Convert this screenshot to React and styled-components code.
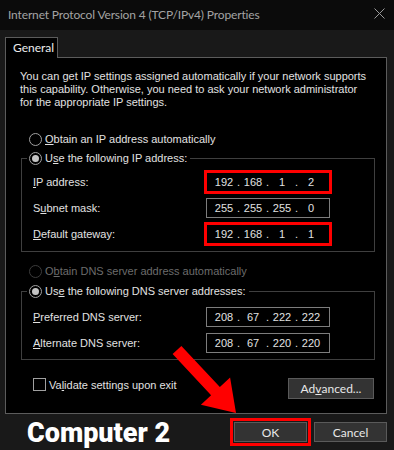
import React from "react";
import styled, { createGlobalStyle, css } from "styled-components";

const Global = createGlobalStyle`
  html, body { margin: 0; padding: 0; background: #191919; }
  * { box-sizing: border-box; }
`;

const dialogFont = `"Liberation Sans", Arial, sans-serif`;
const uiFont = `Lato, "Liberation Sans", sans-serif`;

const Window = styled.div`
  position: relative;
  width: 394px;
  height: 450px;
  background: #191919;
  overflow: hidden;
  font-family: ${dialogFont};
  font-size: 11px;
  color: #e2e2e2;
`;

const TitleBar = styled.div`
  height: 30px;
  background: #0b0b0b;
  display: flex;
  align-items: center;
  justify-content: space-between;
  padding: 0 8px 1px 8px;
`;

const Title = styled.div`
  font-family: ${uiFont};
  font-size: 12px;
  letter-spacing: -0.15px;
  color: #a3a3a3;
`;

const CloseIcon = styled.svg`
  width: 11px;
  height: 11px;
  margin-right: 1px;
  margin-top: -2px;
`;

const Body = styled.div`
  padding: 7px 7px 0 5px;
`;

const TabStrip = styled.div`
  display: flex;
  height: 20px;
`;

const Tab = styled.div`
  position: relative;
  z-index: 1;
  width: 53px;
  height: 21px;
  background: #000;
  border: 1px solid #5c5c5c;
  border-bottom: none;
  font-family: ${uiFont};
  font-size: 12px;
  color: #ececec;
  padding: 2px 0 0 7px;
`;

const Panel = styled.div`
  height: 357px;
  border: 1px solid #5c5c5c;
  background: #000;
  padding: 12px 0 0 14px;
  display: flex;
  flex-direction: column;
`;

const Intro = styled.p`
  margin: 0;
  line-height: 13px;
  width: 350px;
`;

const OptionRow = styled.div`
  display: flex;
  align-items: center;
  height: 14px;
  padding-left: ${(p) => p.$indent || 0}px;
  margin-top: ${(p) => p.$top || 0}px;
  color: ${(p) => (p.$disabled ? "#6c6c6c" : "#e2e2e2")};
  white-space: nowrap;
`;

const RadioCircle = styled.span`
  position: relative;
  width: 13px;
  height: 13px;
  border-radius: 50%;
  border: 1px solid ${(p) => (p.$disabled ? "#3c3c3c" : "#a0a0a0")};
  background: #000;
  margin-right: 3px;
  flex: none;
  ${(p) =>
    p.$checked &&
    css`
      &::after {
        content: "";
        position: absolute;
        left: 2px;
        top: 2px;
        width: 7px;
        height: 7px;
        border-radius: 50%;
        background: #c4c4c4;
      }
    `}
`;

const Key = styled.span`
  text-decoration: underline;
  text-underline-offset: 1px;
`;

const Group = styled.fieldset`
  margin: ${(p) => p.$top}px 0 0 1px;
  width: 354px;
  border: 1px solid #3f3f3f;
  padding: 0 0 ${(p) => p.$bottom}px 0;
  min-width: 0;
`;

const Legend = styled.legend`
  margin-left: 5px;
  padding: 0 3px 0 2px;
`;

const FieldRow = styled.div`
  display: grid;
  grid-template-columns: 173px 124px;
  align-items: center;
  height: 20px;
  padding-left: 11px;
  margin-top: ${(p) => p.$top || 6}px;
`;

const IpBox = styled.div`
  height: 20px;
  border: 1px solid #7d7d7d;
  display: flex;
  align-items: center;
  padding-left: 5px;
  ${(p) =>
    p.$highlight &&
    css`
      outline: 3px solid #ff0000;
      outline-offset: -1px;
      border-color: #ff0000;
    `}
`;

const Octet = styled.span`
  width: 24px;
  text-align: center;
`;

const Dot = styled.span`
  width: 5px;
  text-align: center;
`;

const BottomRow = styled.div`
  display: flex;
  align-items: flex-start;
  margin-top: 18px;
  padding-left: 13px;
`;

const CheckRow = styled.div`
  display: flex;
  align-items: center;
  height: 13px;
  flex: 1;
`;

const CheckBox = styled.span`
  width: 13px;
  height: 13px;
  border: 1px solid #a0a0a0;
  background: #000;
  margin-right: 3px;
`;

const Button = styled.div`
  width: ${(p) => p.$w}px;
  height: ${(p) => p.$h}px;
  background: #333333;
  border: 1px solid #5a5a5a;
  font-family: ${uiFont};
  font-size: 12px;
  color: #e8e8e8;
  display: flex;
  align-items: center;
  justify-content: center;
  margin-right: ${(p) => p.$mr || 0}px;
  ${(p) =>
    p.$highlight &&
    css`
      outline: 3px solid #ff0000;
      outline-offset: 1px;
    `}
`;

const Footer = styled.div`
  display: flex;
  align-items: flex-start;
  padding: 8px 0 0 22px;
`;

const Caption = styled.div`
  flex: 1;
  font-family: Roboto, "Liberation Sans", sans-serif;
  font-weight: 900;
  font-size: 27px;
  line-height: 27px;
  color: #ffffff;
  margin-top: -2px;
`;

const ButtonGroup = styled.div`
  display: flex;
  gap: 7px;
`;

const ArrowLayer = styled.svg`
  position: absolute;
  left: 0;
  top: 0;
  width: 394px;
  height: 450px;
  pointer-events: none;
`;

function Ip({ parts, highlight }) {
  return (
    <IpBox $highlight={highlight}>
      <Octet>{parts[0]}</Octet>
      <Dot>.</Dot>
      <Octet>{parts[1]}</Octet>
      <Dot>.</Dot>
      <Octet>{parts[2]}</Octet>
      <Dot>.</Dot>
      <Octet>{parts[3]}</Octet>
    </IpBox>
  );
}

function Radio({ checked, disabled, children }) {
  return (
    <>
      <RadioCircle $checked={checked} $disabled={disabled} />
      <span>{children}</span>
    </>
  );
}

export default function App() {
  const sx = 177, sy = 350, tx = 236, ty = 413;
  const ang = (Math.atan2(ty - sy, tx - sx) * 180) / Math.PI;
  const L = Math.hypot(tx - sx, ty - sy);
  const arrow = `0,-6 ${L - 30},-6 ${L - 30},-20 ${L},0 ${L - 30},20 ${L - 30},6 0,6`;
  return (
    <Window>
      <Global />
      <TitleBar>
        <Title>Internet Protocol Version 4 (TCP/IPv4) Properties</Title>
        <CloseIcon viewBox="0 0 11 11">
          <path d="M0.5 0.5 L10.5 10.5 M10.5 0.5 L0.5 10.5" stroke="#9a9a9a" strokeWidth="1" />
        </CloseIcon>
      </TitleBar>
      <Body>
        <TabStrip>
          <Tab>General</Tab>
        </TabStrip>
        <Panel>
          <Intro>
            You can get IP settings assigned automatically if your network supports
            this capability. Otherwise, you need to ask your network administrator
            for the appropriate IP settings.
          </Intro>
          <OptionRow $indent={9} $top={23}>
            <Radio>
              <Key>O</Key>btain an IP address automatically
            </Radio>
          </OptionRow>
          <Group $top={5} $bottom={7}>
            <Legend>
              <OptionRow>
                <Radio checked>
                  U<Key>s</Key>e the following IP address:
                </Radio>
              </OptionRow>
            </Legend>
            <FieldRow $top={7}>
              <span>
                <Key>I</Key>P address:
              </span>
              <Ip parts={["192", "168", "1", "2"]} highlight />
            </FieldRow>
            <FieldRow>
              <span>
                S<Key>u</Key>bnet mask:
              </span>
              <Ip parts={["255", "255", "255", "0"]} />
            </FieldRow>
            <FieldRow>
              <span>
                <Key>D</Key>efault gateway:
              </span>
              <Ip parts={["192", "168", "1", "1"]} highlight />
            </FieldRow>
          </Group>
          <OptionRow $indent={9} $top={12} $disabled>
            <Radio disabled>
              O<Key>b</Key>tain DNS server address automatically
            </Radio>
          </OptionRow>
          <Group $top={6} $bottom={6}>
            <Legend>
              <OptionRow>
                <Radio checked>
                  Us<Key>e</Key> the following DNS server addresses:
                </Radio>
              </OptionRow>
            </Legend>
            <FieldRow $top={9}>
              <span>
                <Key>P</Key>referred DNS server:
              </span>
              <Ip parts={["208", "67", "222", "222"]} />
            </FieldRow>
            <FieldRow>
              <span>
                <Key>A</Key>lternate DNS server:
              </span>
              <Ip parts={["208", "67", "220", "220"]} />
            </FieldRow>
          </Group>
          <BottomRow>
            <CheckRow>
              <CheckBox />
              <span>
                Va<Key>l</Key>idate settings upon exit
              </span>
            </CheckRow>
            <Button $w={86} $h={21} $mr={12}>
              Ad<Key>v</Key>anced...
            </Button>
          </BottomRow>
        </Panel>
        <Footer>
          <Caption>Computer 2</Caption>
          <ButtonGroup>
            <Button $w={73} $h={20} $highlight>
              OK
            </Button>
            <Button $w={73} $h={20}>
              Cancel
            </Button>
          </ButtonGroup>
        </Footer>
      </Body>
      <ArrowLayer viewBox="0 0 394 450">
        <polygon points={arrow} fill="#ff0000" transform={`translate(${sx} ${sy}) rotate(${ang})`} />
      </ArrowLayer>
    </Window>
  );
}
